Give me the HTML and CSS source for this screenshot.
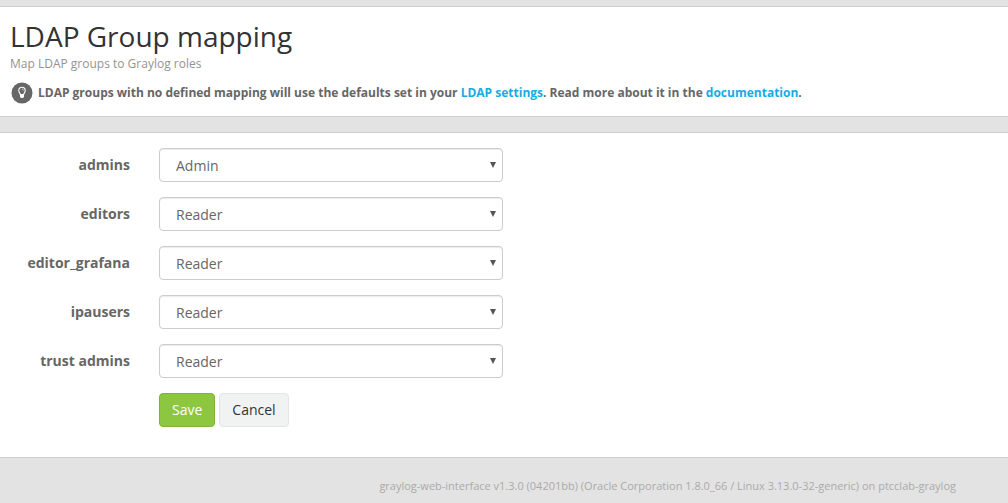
FILE: index.html
```html
<!DOCTYPE html>
<html lang="en">
<head>
<meta charset="utf-8">
<meta name="viewport" content="width=device-width, initial-scale=1">
<title>LDAP Group mapping</title>
<link rel="stylesheet" href="styles.css">
</head>
<body>
<main class="page">
  <header class="panel page-header">
    <h1 class="title">LDAP Group mapping</h1>
    <p class="subtitle">Map LDAP groups to Graylog roles</p>
    <p class="hint">
      <svg class="hint-icon" viewBox="0 0 22 22" aria-hidden="true">
        <circle cx="11" cy="11" r="10.5" fill="#666"/>
        <path d="M9.4 12.6C9.2 11.2 7.8 10.6 7.8 8.400a3.2 3.2 0 0 1 6.4 0c0 2.2-1.4 2.8-1.6 4.2z" fill="none" stroke="#fff" stroke-width="1.1"/>
        <path d="M11 7.1c.9 0 1.5.5 1.5 1.3" fill="none" stroke="#fff" stroke-width=".7"/>
        <path d="M9 12.3h4v2.6l-1.2 1.2h-1.6L9 14.900z" fill="#fff"/>
      </svg>
      <span>LDAP groups with no defined mapping will use the defaults set in your <a href="#settings">LDAP settings</a>. Read more about it in the <a href="#documentation">documentation</a>.</span>
    </p>
  </header>
  <section class="panel">
    <form class="mapping-form">
      <label class="group-label" for="admins">admins</label>
      <div class="select-box"><select id="admins" class="role-select"><option selected>Admin</option><option>Reader</option></select></div>
      <label class="group-label" for="editors">editors</label>
      <div class="select-box"><select id="editors" class="role-select"><option>Admin</option><option selected>Reader</option></select></div>
      <label class="group-label" for="editor-grafana">editor_grafana</label>
      <div class="select-box"><select id="editor-grafana" class="role-select"><option>Admin</option><option selected>Reader</option></select></div>
      <label class="group-label" for="ipausers">ipausers</label>
      <div class="select-box"><select id="ipausers" class="role-select"><option>Admin</option><option selected>Reader</option></select></div>
      <label class="group-label" for="trust-admins">trust admins</label>
      <div class="select-box"><select id="trust-admins" class="role-select"><option>Admin</option><option selected>Reader</option></select></div>
      <div class="actions">
        <button type="submit" class="btn btn-save">Save</button>
        <button type="button" class="btn btn-cancel">Cancel</button>
      </div>
    </form>
  </section>
</main>
<footer class="footer">graylog-web-interface v1.3.0 (04201bb) (Oracle Corporation 1.8.0_66 / Linux 3.13.0-32-generic) on ptcclab-graylog</footer>
</body>
</html>
```
FILE: styles.css
```css
* {
  box-sizing: border-box;
}

body {
  margin: 0;
  background: #e3e3e3;
  color: #666;
  font-family: "Open Sans", "Noto Sans", sans-serif;
  font-size: 14px;
  line-height: 20px;
}

.page {
  display: flex;
  flex-direction: column;
  gap: 15px;
  padding-top: 6px;
}

.panel {
  background: #fff;
  border-top: 1px solid #cfcfcf;
  border-bottom: 1px solid #cfcfcf;
}

.page-header {
  padding: 12px 10px;
}

.title {
  margin: 0;
  color: #333;
  font-size: 28px;
  font-weight: 400;
  line-height: 34px;
}

.subtitle {
  margin: 3px 0 0;
  color: #939393;
  font-size: 12px;
  line-height: 16px;
}

.hint {
  display: flex;
  align-items: center;
  gap: 5px;
  margin: 10px 0 0;
  padding-left: 1px;
  font-size: 12px;
  font-weight: 700;
}

.hint-icon {
  flex: none;
  width: 22px;
  height: 22px;
}

.hint a {
  color: #16ace3;
  text-decoration: none;
}

.mapping-form {
  display: grid;
  grid-template-columns: 130px minmax(0, 344px);
  gap: 15px 29px;
  padding: 15px 15px 30px 0;
}

.group-label {
  font-weight: 700;
  line-height: 34px;
  text-align: right;
}

.select-box {
  display: grid;
  align-items: center;
}

.select-box::after {
  content: "";
  grid-area: 1 / 1;
  justify-self: end;
  width: 6px;
  height: 6px;
  margin-right: 7px;
  background: #555;
  clip-path: polygon(0 0, 100% 0, 50% 100%);
  pointer-events: none;
}

.role-select {
  grid-area: 1 / 1;
  width: 100%;
  height: 34px;
  padding: 2px 16px 0;
  border: 1px solid #ccc;
  border-radius: 4px;
  background: #fff;
  box-shadow: inset 0 1px 1px rgba(0, 0, 0, 0.08);
  color: #666;
  font: inherit;
  appearance: none;
}

.actions {
  display: flex;
  grid-column: 2;
  gap: 4px;
}

.btn {
  height: 34px;
  padding: 0 12px;
  border: 1px solid;
  border-radius: 4px;
  font: inherit;
}

.btn-save {
  background: #8dc63f;
  border-color: #7fb236;
  color: #fff;
}

.btn-cancel {
  background: #f1f2f2;
  border-color: #e3e5e5;
  color: #333;
}

.footer {
  padding: 18px 52px 8px 10px;
  color: #aaa;
  font-size: 11px;
  text-align: right;
}
```
